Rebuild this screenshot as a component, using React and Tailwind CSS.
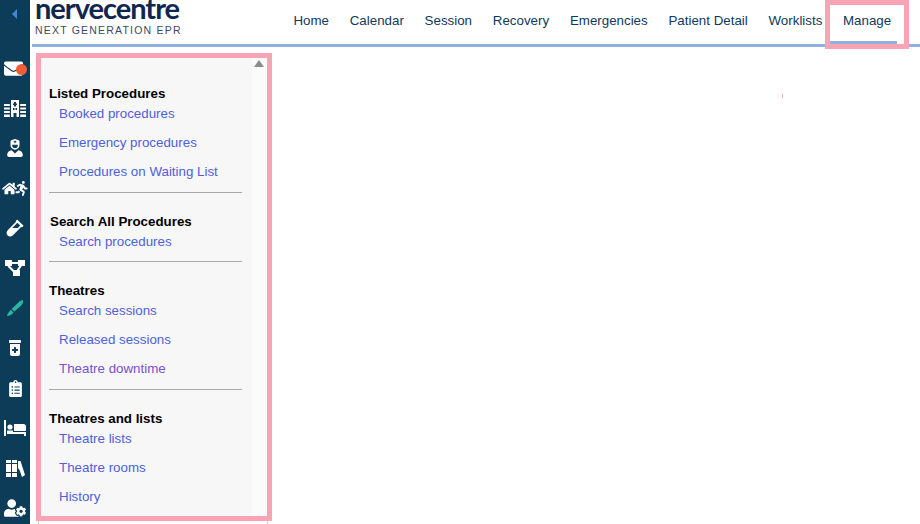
import React from "react";
import { FaUserNurse, FaHome, FaRunning, FaVial, FaClipboardList, FaUserCog, FaEnvelope } from "react-icons/fa";
import { FaPrescriptionBottleMedical } from "react-icons/fa6";

const Row = ({ children }) => <div className="h-10 flex items-center justify-center text-white relative">{children}</div>;

const Scalpel = () => (
  <svg width="18" height="18" viewBox="0 0 18 18"><path d="M17 1c.6 2.400-.6 4.600-2.600 6.300L8.300 12.600 5.600 10 12.400 3.400C13.800 2 15.400 1 17 1zM4.800 10.800l2.700 2.600C6 15.400 3.700 16.800 1 17c.6-2.200 2-4.400 3.800-6.200z" fill="#2cb5a0" /></svg>
);
const Books = () => (
  <svg width="19" height="17" viewBox="0 0 19 17" fill="#fff"><path d="M0 0h5v3H0zM0 4h5v8H0zM0 13h5v4H0zM6 0h5v3H6zM6 4h5v8H6zM6 13h5v4H6zM12 1h2.500l4.500 14-3 2-2.500-7-1.500-2V17h0z" /></svg>
);
const Hospital = () => (
  <svg width="22" height="17" viewBox="0 0 22 17" fill="#fff"><path fillRule="evenodd" d="M7 0h8v17h-2.500v-4h-3v4H7zM10 2v1.500H9V5h1v1.500h2V5h1V3.500h-1V2zM9 8v2h1.500V8zM11.500 8v2H13V8z" /><path d="M0 4h5.800v2H0zM0 7.500h5.800v2H0zM0 11h5.800v2H0zM0 14.500h5.800V17H0zM16.200 4H22v2h-5.800zM16.200 7.500H22v2h-5.800zM16.200 11H22v2h-5.800zM16.200 14.500H22V17h-5.800z" /></svg>
);
const Network = () => (
  <svg width="20" height="16" viewBox="0 0 20 16" fill="#fff"><path d="M0 0h7v6H0zM13 0h7v6h-7zM8 10h7v6H8z" /><path d="M6 2h8v2H6zM4 5l6 6-1.500 1.500-6-6z" /><path d="M15 5h2.500l-4 6H11z" /></svg>
);
const Bed = () => (
  <svg width="22" height="16" viewBox="0 0 22 16" fill="#fff"><path d="M0 0h2v16H0zM3 12h19v4h-2v-2H3z" /><circle cx="6" cy="7" r="2.600" /><path d="M10 4h9.500c1.400 0 2.500 1.100 2.500 2.500V11H10z" /><path d="M3 10.500h6V12H3z" /></svg>
);

const Sidebar = () => (
  <div className="w-[30px] h-[524px] shrink-0 bg-[#0c3c58]">
    <div className="h-[28px] flex items-center justify-center">
      <div className="w-0 h-0 border-y-[5px] border-y-transparent border-r-[5px] border-r-[#3f88d8] -ml-[2px]" />
    </div>
    <div className="h-5" />
    <Row><FaEnvelope size={19} className="-ml-[3px]" /><span className="absolute left-[16px] top-[16px] w-[11px] h-[11px] rounded-full bg-[#ec5f37]" /></Row>
    <Row><Hospital /></Row>
    <Row><FaUserNurse size={18} /></Row>
    <Row><FaHome size={15} className="mr-[-3px]" /><FaRunning size={15} /></Row>
    <Row><FaVial size={18} /></Row>
    <Row><Network /></Row>
    <Row><Scalpel /></Row>
    <Row><FaPrescriptionBottleMedical size={16} /></Row>
    <Row><FaClipboardList size={17} /></Row>
    <Row><Bed /></Row>
    <Row><Books /></Row>
    <Row><FaUserCog size={22} /></Row>
  </div>
);

const items = ["Home", "Calendar", "Session", "Recovery", "Emergencies", "Patient Detail", "Worklists"];

const Header = () => (
  <div className="h-[47px] ml-[2px] border-b-[3px] border-b-[#8fb0e0] flex relative">
    <div className="w-[251px] pl-[3px] shrink-0">
      <div className="font-['Lato'] font-bold text-[29px] leading-[16px] text-[#11264f] tracking-[-1px]">nervecentre</div>
      <div className="font-['Liberation_Sans'] text-[10.500px] leading-[12px] mt-[8px] tracking-[1.200px] text-[#3d4a63] whitespace-nowrap">NEXT GENERATION EPR</div>
    </div>
    <div className="flex items-start pt-[13px] text-[13.330px] leading-[16px] text-[#0f3a5c] font-['Liberation_Sans']">
      {items.map((t) => <div key={t} className="px-[10.400px] whitespace-nowrap">{t}</div>)}
    </div>
    <div className="absolute left-[793px] top-0 w-[84px] h-[49px] border-[5px] border-[#f8a4b4] bg-white text-[13.330px] leading-[16px] text-[#0f3a5c] font-['Liberation_Sans']">
      <div className="w-[67px] h-[39px] border-b-[3px] border-b-[#8fb0e0] pt-[8px] pl-[13px]">Manage</div>
    </div>
  </div>
);

const Group = ({ title, links, shift, last, pad }) => (
  <div className={last ? "" : `border-b border-b-[#a8a8a8] mb-[21px] ${pad}`}>
    <div className={`font-bold text-black leading-[16px] ${shift ? "pl-px" : ""}`}>{title}</div>
    <div className="pl-[10px] pt-[4px] flex flex-col gap-[13px]">
      {links.map(([t, c]) => <div key={t} className={`leading-[16px] ${c ? "text-[#7a4fd0]" : "text-[#5060dc]"}`}>{t}</div>)}
    </div>
  </div>
);

const Panel = () => (
  <div className="w-[236px] h-[468px] ml-[6px] mt-[6px] border-[5px] border-[#f8a4b4] bg-white flex font-['Liberation_Sans'] text-[13.330px] relative">
    <div className="w-[211px] bg-[#f7f7f7] pl-[8px] pt-[28px] pr-[10px]">
      <Group pad="pb-[12px]" title="Listed Procedures" links={[["Booked procedures"], ["Emergency procedures"], ["Procedures on Waiting List"]]} />
      <Group pad="pb-[11px]" title="Search All Procedures" shift links={[["Search procedures"]]} />
      <Group pad="pb-[12px]" title="Theatres" links={[["Search sessions"], ["Released sessions"], ["Theatre downtime", 1]]} />
      <Group title="Theatres and lists" last links={[["Theatre lists"], ["Theatre rooms"], ["History"]]} />
    </div>
    <div className="flex-1 bg-[#fbfbfb] flex justify-center pt-[2px] pr-px">
      <div className="w-0 h-0 border-x-[5px] border-x-transparent border-b-[7px] border-b-[#8c8c8c]" />
    </div>
  </div>
);

export default function App() {
  return (
    <div className="w-[920px] h-[524px] bg-white flex overflow-hidden">
      <Sidebar />
      <div className="flex-1 relative">
        <Header />
        <Panel />
        <div className="absolute left-[8px] top-[521px] w-[230px] h-[3px] border-x border-x-[#cfcfcf]" />
        <div className="absolute left-[752px] top-[94px] w-px h-[4px] bg-[#f8a4b4]" />
      </div>
    </div>
  );
}
